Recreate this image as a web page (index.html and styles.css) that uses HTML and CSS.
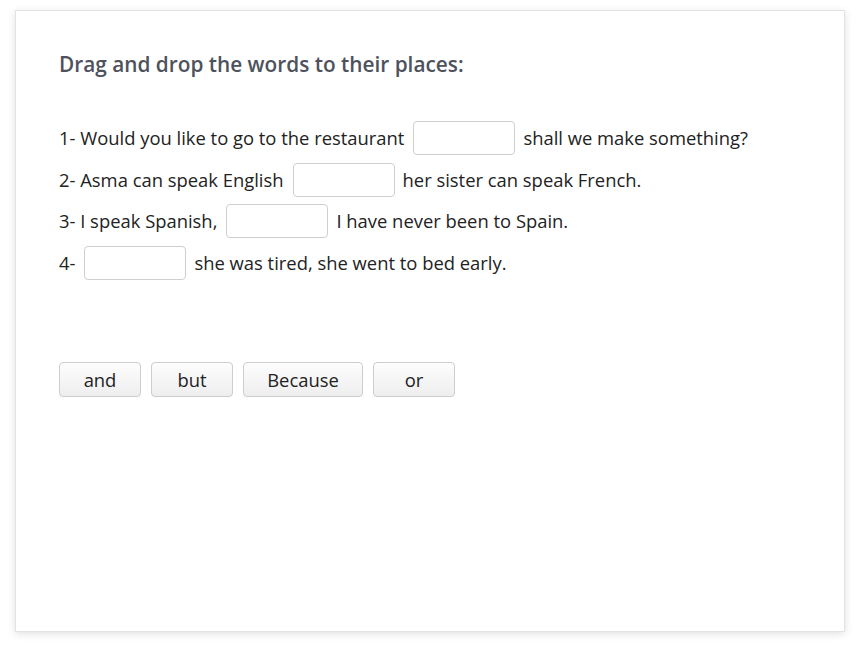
FILE: index.html
```html
<!DOCTYPE html>
<html>
<head>
<meta charset="utf-8">
<link rel="stylesheet" href="styles.css">
</head>
<body>
<div class="card">
  <h1 class="title">Drag and drop the words to their places:</h1>
  <div class="sentences">
    <div class="row"><span>1- Would you like to go to the restaurant</span><span class="drop"></span><span>shall we make something?</span></div>
    <div class="row"><span>2- Asma can speak English</span><span class="drop"></span><span>her sister can speak French.</span></div>
    <div class="row"><span>3- I speak Spanish,</span><span class="drop"></span><span>I have never been to Spain.</span></div>
    <div class="row"><span>4-</span><span class="drop"></span><span>she was tired, she went to bed early.</span></div>
  </div>
  <div class="words">
    <div class="word">and</div>
    <div class="word">but</div>
    <div class="word wide">Because</div>
    <div class="word">or</div>
  </div>
</div>
</body>
</html>
```
FILE: styles.css
```css
html, body {
  margin: 0;
  padding: 0;
  background: #fff;
}
body {
  padding: 10px 16px 21px 15px;
  font-family: "Open Sans", sans-serif;
  color: #222;
}
.card {
  box-sizing: border-box;
  height: 622px;
  border: 1px solid #e2e2e2;
  box-shadow: 0 2px 8px rgba(0,0,0,0.12);
  padding: 39px 43px;
}
.title {
  margin: 0;
  font-size: 20.8px;
  font-weight: 600;
  color: #4d525c;
  line-height: 28px;
}
.sentences {
  margin-top: 43px;
  display: flex;
  flex-direction: column;
  gap: 7.5px;
}
.row {
  display: flex;
  align-items: center;
  gap: 8px;
  font-size: 18.4px;
  line-height: 34px;
}
.drop {
  box-sizing: border-box;
  width: 102px;
  height: 34px;
  margin-left: 1px;
  border: 1px solid #cfcfcf;
  border-radius: 4px;
  background: #fff;
}
.words {
  margin-top: 82px;
  display: flex;
  gap: 10px;
}
.word {
  box-sizing: border-box;
  width: 82px;
  height: 35px;
  border: 1px solid #cdcdcd;
  border-radius: 4px;
  background: linear-gradient(#fdfdfd, #eeeeee);
  font-size: 18.4px;
  line-height: 33px;
  text-align: center;
  color: #222;
}
.word.wide {
  width: 120px;
}
```
